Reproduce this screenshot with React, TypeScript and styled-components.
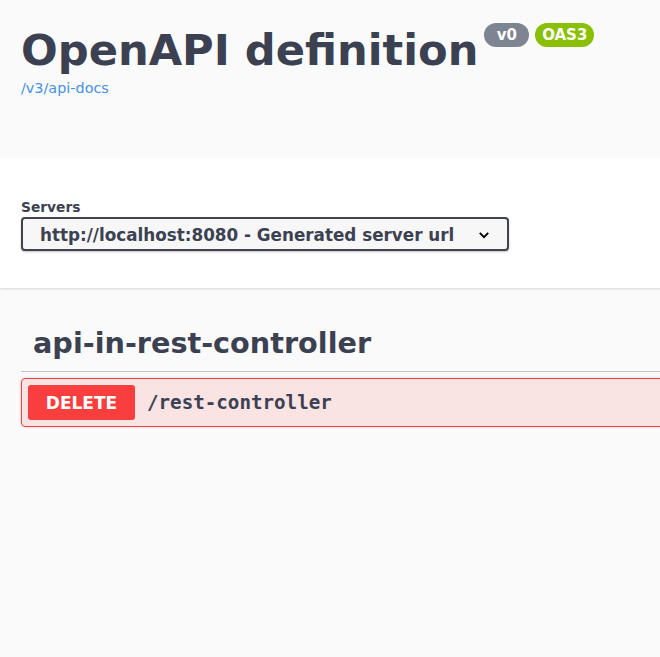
import React from "react";
import styled, { createGlobalStyle } from "styled-components";

const Global = createGlobalStyle`
  html, body { margin: 0; padding: 0; overflow: hidden; }
  body { background: #fafafa; font-family: "DejaVu Sans", sans-serif; color: #3b4151; }
`;

const Page = styled.div`
  width: 900px;
  min-height: 657px;
  background: #fafafa;
`;

const Wrapper = styled.div`
  padding: 0 21px;
  box-sizing: border-box;
`;

const InfoSection = styled.section`
  padding: 25px 0 0;
  height: 158px;
  box-sizing: border-box;
`;

const TitleRow = styled.div`
  display: flex;
  align-items: flex-start;
`;

const Title = styled.h2`
  margin: 0;
  font-size: 43.2px;
  font-weight: 700;
  line-height: 1.2;
  color: #3b4151;
`;

const Badge = styled.span<{ $bg: string }>`
  display: inline-block;
  margin: -2px 0 0 6px;
  padding: 2px 7px;
  border-radius: 57px;
  background: ${(p) => p.$bg};
  color: #fff;
  font-size: 15px;
  font-weight: 700;
  line-height: 20px;
  white-space: pre;
`;

const DocLink = styled.a`
  display: inline-block;
  margin-top: 3px;
  font-size: 14.4px;
  color: #4990e2;
  text-decoration: none;
`;

const SchemeContainer = styled.section`
  background: #fff;
  box-shadow: 0 1px 2px 0 rgba(0, 0, 0, 0.15);
  height: 130px;
  padding-top: 41px;
  box-sizing: border-box;
`;

const Label = styled.div`
  font-size: 13.8px;
  font-weight: 700;
  line-height: 17px;
  margin-bottom: 1px;
`;

const Select = styled.div`
  width: 488px;
  height: 34px;
  box-sizing: border-box;
  border: 2px solid #41444e;
  border-radius: 4px;
  background: #f7f7f7;
  box-shadow: 0 1px 2px 0 rgba(0, 0, 0, 0.25);
  display: flex;
  align-items: center;
  justify-content: space-between;
  padding: 2px 16px 0 17px;
  font-size: 16.8px;
  font-weight: 700;
  color: #3b4151;
`;

const TagSection = styled.section`
  padding-top: 22px;
`;

const TagHeader = styled.h3`
  margin: 0;
  padding: 16px 12px 11px;
  font-size: 28.7px;
  font-weight: 700;
  line-height: 1.2;
  border-bottom: 1px solid rgba(59, 65, 81, 0.3);
  color: #3b4151;
`;

const OpBlock = styled.div`
  margin-top: 6px;
  border: 1px solid #f93e3e;
  border-radius: 4px;
  background: rgba(249, 62, 62, 0.12);
  box-shadow: 0 0 3px rgba(0, 0, 0, 0.19);
  display: flex;
  align-items: center;
  padding: 6px;
  gap: 12px;
`;

const Method = styled.span`
  background: #f93e3e;
  color: #fff;
  border-radius: 3px;
  width: 107px;
  height: 35px;
  display: flex;
  align-items: center;
  justify-content: center;
  font-size: 17px;
  font-weight: 700;
`;

const Path = styled.span`
  font-family: "DejaVu Sans Mono", monospace;
  font-size: 19.2px;
  font-weight: 700;
  color: #3b4151;
`;

export default function App() {
  return (
    <Page>
      <Global />
      <Wrapper>
        <InfoSection>
          <TitleRow>
            <Title>OpenAPI definition</Title>
            <Badge $bg="#7d8492">{" v0 "}</Badge>
            <Badge $bg="#89bf04">OAS3</Badge>
          </TitleRow>
          <DocLink href="#">/v3/api-docs</DocLink>
        </InfoSection>
      </Wrapper>
      <SchemeContainer>
        <Wrapper>
          <Label>Servers</Label>
          <Select>
            <span>http://localhost:8080 - Generated server url</span>
            <svg width="14" height="14" viewBox="0 0 20 20">
              <path d="M4 7 L10 13 L16 7" fill="none" stroke="#000" strokeWidth="2.8" />
            </svg>
          </Select>
        </Wrapper>
      </SchemeContainer>
      <Wrapper>
        <TagSection>
          <TagHeader>api-in-rest-controller</TagHeader>
          <OpBlock>
            <Method>DELETE</Method>
            <Path>/rest-controller</Path>
          </OpBlock>
        </TagSection>
      </Wrapper>
    </Page>
  );
}
